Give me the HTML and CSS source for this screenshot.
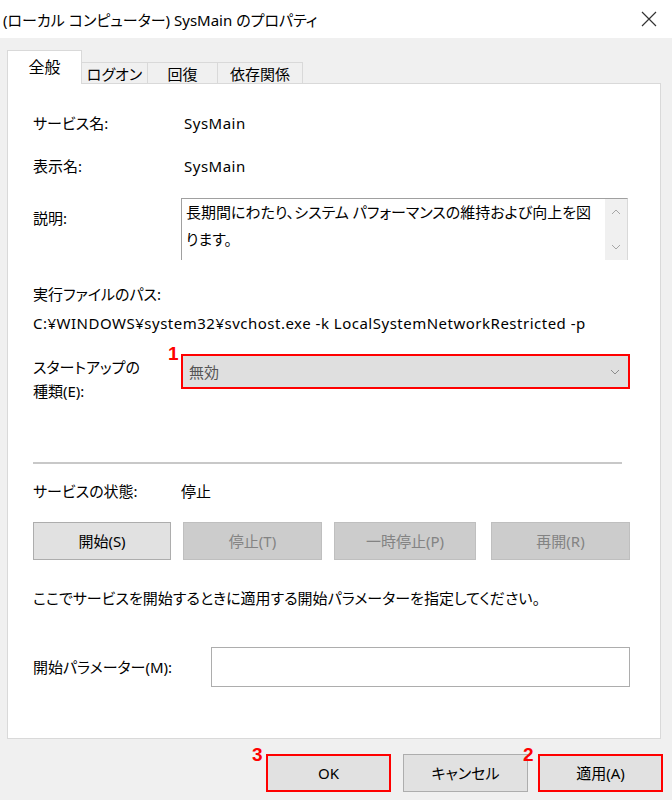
FILE: index.html
```html
<!DOCTYPE html>
<html lang="ja">
<head>
    <meta charset="UTF-8">
    <title>(ローカル コンピューター) SysMain のプロパティ</title>
    <link rel="stylesheet" href="styles.css">
</head>
<body>
    <div class="window">
        <div class="titlebar">
            <span class="title">(ローカル コンピューター) SysMain のプロパティ</span>
            <svg class="close" width="16" height="16" viewBox="0 0 16 16">
                <path d="M1 1 L15 15 M15 1 L1 15" stroke="#333" stroke-width="1.2" fill="none"/>
            </svg>
        </div>

        <div class="tabs">
            <div class="tab active">全般</div>
            <div class="tab tab-logon">ログオン</div>
            <div class="tab tab-recover">回復</div>
            <div class="tab tab-depend">依存関係</div>
        </div>

        <div class="panel">
            <div class="row row-name">
                <span class="label">サービス名:</span>
                <span class="value latin">SysMain</span>
            </div>
            <div class="row row-display">
                <span class="label">表示名:</span>
                <span class="value latin">SysMain</span>
            </div>
            <div class="row row-desc">
                <span class="label">説明:</span>
                <div class="desc-box">
                    <div class="desc-text">長期間にわたり、システム パフォーマンスの維持および向上を図<br>ります。</div>
                    <div class="scrollbar">
                        <svg width="10" height="6" viewBox="0 0 10 6"><path d="M1 5 L5 1 L9 5" stroke="#a6a6a6" fill="none"/></svg>
                        <svg width="10" height="6" viewBox="0 0 10 6"><path d="M1 1 L5 5 L9 1" stroke="#a6a6a6" fill="none"/></svg>
                    </div>
                </div>
            </div>
            <div class="path-label">実行ファイルのパス:</div>
            <div class="path-value latin">C:¥WINDOWS¥system32¥svchost.exe -k LocalSystemNetworkRestricted -p</div>
            <div class="row row-startup">
                <span class="label startup-label">スタートアップの<br>種類(E):</span>
                <div class="select">
                    <span class="mark mark-1">1</span>
                    <span>無効</span>
                    <svg width="10" height="6" viewBox="0 0 10 6"><path d="M1 1 L5 5 L9 1" stroke="#8c8c8c" fill="none"/></svg>
                </div>
            </div>

            <div class="separator"></div>

            <div class="row row-status">
                <span class="label">サービスの状態:</span>
                <span class="value">停止</span>
            </div>
            <div class="svc-buttons">
                <div class="btn btn-start">開始(S)</div>
                <div class="btn disabled btn-stop">停止(T)</div>
                <div class="btn disabled btn-pause">一時停止(P)</div>
                <div class="btn disabled btn-resume">再開(R)</div>
            </div>
            <div class="hint">ここでサービスを開始するときに適用する開始パラメーターを指定してください。</div>
            <div class="row row-param">
                <span class="label param-label">開始パラメーター(M):</span>
                <div class="param-input"></div>
            </div>
        </div>

        <div class="footer">
            <div class="btn marked btn-ok"><span class="mark mark-3">3</span>OK</div>
            <div class="btn btn-cancel">キャンセル</div>
            <div class="btn marked btn-apply"><span class="mark mark-2">2</span>適用(A)</div>
        </div>
    </div>
</body>
</html>
```

FILE: styles.css
```css
body {
    margin: 0;
    background-color: #f0f0f0;
    font-family: "Noto Sans", "Noto Sans CJK JP", sans-serif;
    font-size: 15px;
    font-feature-settings: "palt";
    color: #000;
}
.window {
    width: 672px;
    height: 800px;
    display: flex;
    flex-direction: column;
}
.titlebar {
    height: 38px;
    background-color: #fff;
    display: flex;
    align-items: center;
    justify-content: space-between;
    padding: 0 15px 0 3px;
}
.title {
    font-size: 15px;
}
.tabs {
    display: flex;
    align-items: flex-end;
    height: 46px;
    margin-bottom: -1px;
    padding-left: 7px;
}
.tab {
    box-sizing: border-box;
    height: 22px;
    border: 1px solid #d9d9d9;
    border-bottom: none;
    margin-left: -1px;
    display: flex;
    align-items: center;
    justify-content: center;
    font-size: 15px;
    line-height: 20px;
}
.tab.active {
    position: relative;
    z-index: 1;
    margin-left: 0;
    width: 75px;
    height: 34px;
    background-color: #fff;
    align-items: flex-start;
    padding-top: 6px;
    font-size: 16px;
}
.tab-logon { width: 67px; }
.tab-recover { width: 71px; }
.tab-depend { width: 86px; }

.panel {
    box-sizing: border-box;
    width: 654px;
    height: 656px;
    margin-left: 7px;
    background-color: #fff;
    border: 1px solid #d9d9d9;
    padding: 29px 0 0 25px;
}
.row {
    display: flex;
    align-items: center;
    line-height: 20px;
}
.label {
    width: 148px;
    flex-shrink: 0;
}
.value {
    padding-left: 3px;
}
.latin {
    letter-spacing: 0.5px;
}
.row-display {
    margin-top: 23px;
}
.row-desc {
    margin-top: 22px;
    align-items: flex-start;
}
.row-desc .label {
    padding-top: 10px;
}
.desc-box {
    box-sizing: border-box;
    width: 447px;
    height: 62px;
    border: 1px solid #a0a0a0;
    border-right-color: #d9d9d9;
    border-bottom: none;
    display: flex;
}
.desc-text {
    flex: 1;
    padding: 0 0 0 4px;
    line-height: 27px;
}
.scrollbar {
    width: 22px;
    background-color: #f0f0f0;
    display: flex;
    flex-direction: column;
    align-items: center;
    justify-content: space-between;
    padding: 10px 0 10px;
}
.path-label {
    margin-top: 24px;
    line-height: 20px;
}
.path-value {
    margin-top: 9px;
    line-height: 20px;
}
.row-startup {
    margin-top: 21px;
    align-items: flex-start;
}
.startup-label {
    line-height: 24px;
    margin-top: 1px;
}
.select {
    position: relative;
    box-sizing: border-box;
    width: 449px;
    height: 35px;
    border: 2px solid #ff0000;
    background-color: #dfdfdf;
    color: #555;
    display: flex;
    align-items: center;
    justify-content: space-between;
    padding: 0 8px 0 6px;
}
.mark {
    position: absolute;
    color: #ff0000;
    font-family: "Liberation Sans", Arial, sans-serif;
    font-weight: bold;
    font-size: 19px;
    line-height: 19px;
}
.mark-1 {
    left: -15px;
    top: -12px;
}
.separator {
    width: 589px;
    height: 0;
    border-top: 2px solid #c8c8c8;
    margin-top: 59px;
}
.row-status {
    margin-top: 17px;
}
.row-status .value {
    padding-left: 0;
}
.svc-buttons {
    display: flex;
    margin-top: 21px;
    gap: 12px;
}
.btn {
    box-sizing: border-box;
    height: 38px;
    border: 1px solid #adadad;
    background-color: #e1e1e1;
    display: flex;
    align-items: center;
    justify-content: center;
    line-height: 20px;
}
.btn.disabled {
    background-color: #cccccc;
    border-color: #bfbfbf;
    color: #838383;
}
.btn-start { width: 138px; }
.btn-stop { width: 139px; }
.btn-pause { width: 142px; }
.btn-resume { width: 139px; margin-left: 3px; }
.hint {
    margin-top: 28px;
    line-height: 20px;
}
.row-param {
    margin-top: 39px;
}
.param-label {
    width: 178px;
}
.param-input {
    box-sizing: border-box;
    width: 419px;
    height: 40px;
    border: 1px solid #adadad;
}

.footer {
    display: flex;
    justify-content: flex-end;
    padding: 15px 9px 0 0;
    gap: 12px;
}
.footer .btn {
    height: 38px;
    width: 125px;
}
.btn.marked {
    position: relative;
    border: 2px solid #ff0000;
}
.btn-ok {
    width: 125px;
}
.btn-apply {
    margin-left: -2px;
}
.mark-3 {
    left: -16px;
    top: -11px;
}
.mark-2 {
    left: -17px;
    top: -11px;
}
```
